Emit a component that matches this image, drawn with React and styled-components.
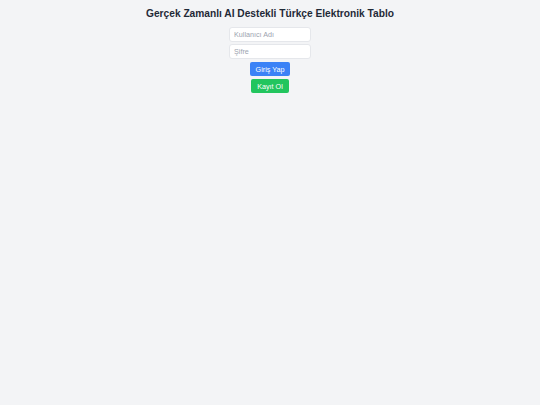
import React from 'react'
import styled, { createGlobalStyle } from 'styled-components'

const GlobalStyle = createGlobalStyle`
    html, body {
        margin: 0;
        padding: 0;
        background: #f3f4f6;
        font-family: "Liberation Sans", Arial, sans-serif;
    }
`

const Page = styled.div`
    min-height: 405px;
    padding: 7px 8px;
    box-sizing: border-box;
    display: flex;
    flex-direction: column;
    align-items: center;
    background: #f3f4f6;
`

const Title = styled.h1`
    margin: 0 0 7px;
    font-size: 10.2px;
    font-weight: 700;
    color: #1f2937;
    text-align: center;
    line-height: 13px;
`

const Form = styled.div`
    display: flex;
    flex-direction: column;
    align-items: center;
    gap: 2px;
`

const Input = styled.input`
    width: 82px;
    height: 15px;
    box-sizing: border-box;
    padding: 0 4px;
    border: 1px solid #e5e7eb;
    border-radius: 3px;
    background: #fff;
    font-family: inherit;
    font-size: 7.2px;
    color: #374151;
    outline: none;
    &::placeholder {
        color: #9ca3af;
    }
`

const Button = styled.button`
    width: ${p => p.$w}px;
    height: 14px;
    margin-top: ${p => p.$mt || 0}px;
    padding: 0;
    border: none;
    border-radius: 2px;
    background: ${p => p.$bg};
    color: #fff;
    font-family: inherit;
    font-size: 7.2px;
    cursor: pointer;
`

const App = () => {
    return (
        <>
            <GlobalStyle />
            <Page>
                <Title>Gerçek Zamanlı AI Destekli Türkçe Elektronik Tablo</Title>
                <Form>
                    <Input placeholder='Kullanıcı Adı' />
                    <Input type='password' placeholder='Şifre' />
                    <Button $bg='#3b82f6' $w={40} $mt={1}>Giriş Yap</Button>
                    <Button $bg='#22c55e' $w={38} $mt={1}>Kayıt Ol</Button>
                </Form>
            </Page>
        </>
    )
}

export default App
